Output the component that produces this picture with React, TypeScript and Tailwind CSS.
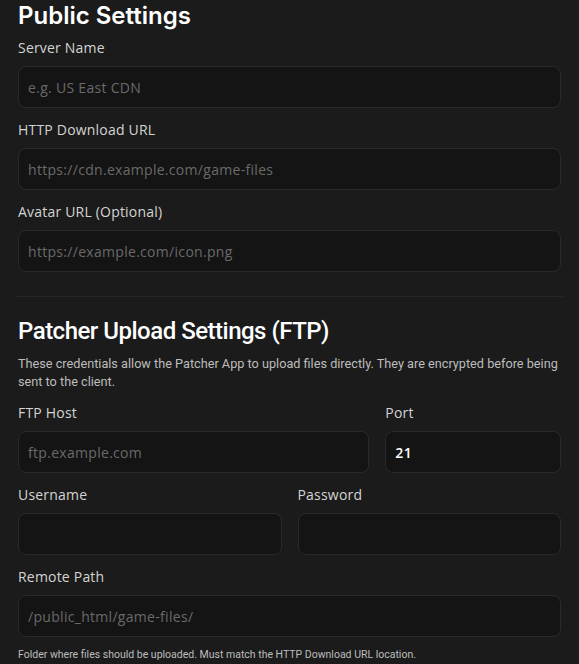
import React from "react";

interface FieldProps {
  label: string;
  placeholder?: string;
  value?: string;
  type?: string;
}

const Field: React.FC<FieldProps> = ({ label, placeholder, value, type = "text" }) => (
  <div className="flex flex-col">
    <label className="text-[14px] leading-5 tracking-[0.2px] text-[#d4d4d4] font-[Open_Sans,sans-serif]">{label}</label>
    <input
      type={type}
      placeholder={placeholder}
      defaultValue={value}
      className="mt-2 h-[42px] w-full rounded-lg border border-[#2a2a2a] bg-[#141414] px-[9px] text-[14px] tracking-[0.3px] font-semibold text-white placeholder:font-normal placeholder:text-[#6a6a6a] focus:outline-none font-[Open_Sans,sans-serif]"
    />
  </div>
);

export default function App() {
  return (
    <div className="min-h-screen bg-[#1b1b1b] px-[18px] font-[Inter,sans-serif]">
      <section className="flex flex-col">
        <h2 className="text-[24px] leading-8 font-semibold text-white">Public Settings</h2>
        <div className="mt-[6px] flex flex-col gap-3">
          <Field label="Server Name" placeholder="e.g. US East CDN" />
          <Field label="HTTP Download URL" placeholder="https://cdn.example.com/game-files" />
          <Field label="Avatar URL (Optional)" placeholder="https://example.com/icon.png" />
        </div>
      </section>

      <hr className="-mx-[2px] mt-6 border-[#262626]" />

      <section className="mt-[18px] flex flex-col">
        <h2 className="text-[24px] leading-8 font-medium tracking-[-0.5px] text-white font-[Roboto,sans-serif]">
          Patcher Upload Settings (FTP)
        </h2>
        <p className="mt-2 text-[12.7px] leading-[18px] text-[#bdbdbd] font-[Roboto,sans-serif]">
          These credentials allow the Patcher App to upload files directly. They are encrypted before being sent to the client.
        </p>
        <div className="mt-3 flex flex-col gap-3">
          <div className="grid grid-cols-[2fr_1fr] gap-4">
            <Field label="FTP Host" placeholder="ftp.example.com" />
            <Field label="Port" value="21" />
          </div>
          <div className="grid grid-cols-2 gap-4">
            <Field label="Username" />
            <Field label="Password" type="password" />
          </div>
          <Field label="Remote Path" placeholder="/public_html/game-files/" />
        </div>
        <p className="mt-[10px] text-[10.5px] leading-4 text-[#bdbdbd] font-[Roboto,sans-serif]">
          Folder where files should be uploaded. Must match the HTTP Download URL location.
        </p>
      </section>
    </div>
  );
}
